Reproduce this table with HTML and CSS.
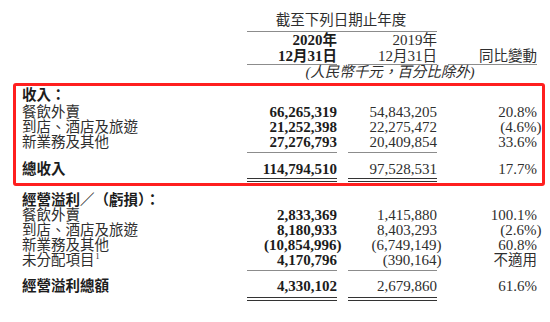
FILE: index.html
```html
<!DOCTYPE html>
<html lang="zh-Hant">
<head>
    <meta charset="UTF-8">
    <title>經營業績</title>
    <link rel="stylesheet" href="styles.css">
</head>
<body>

<div class="report">
    <!-- Шапка таблицы -->
    <div class="row title-row">
        <div class="title">截至下列日期止年度</div>
    </div>
    <div class="row head-row">
        <div class="cell c1 bold">2020<span class="cjk">年</span><br>12<span class="cjk">月</span>31<span class="cjk">日</span></div>
        <div class="cell c2">2019<span class="cjk">年</span><br>12<span class="cjk">月</span>31<span class="cjk">日</span></div>
        <div class="cell c3 bottom"><span class="cjk">同比變動</span></div>
    </div>
    <div class="row unit-row">
        <div class="unit">(<span class="cjk">人民幣千元，百分比除外</span>)</div>
    </div>

    <!-- Выручка -->
    <div class="box">
        <div class="row head-label"><div class="label bold">收入：</div></div>
        <div class="row">
            <div class="label">餐飲外賣</div>
            <div class="cell c1 bold">66,265,319</div>
            <div class="cell c2">54,843,205</div>
            <div class="cell c3">20.8%</div>
        </div>
        <div class="row">
            <div class="label">到店、酒店及旅遊</div>
            <div class="cell c1 bold">21,252,398</div>
            <div class="cell c2">22,275,472</div>
            <div class="cell c3"><span class="neg">(4.6%)</span></div>
        </div>
        <div class="row last">
            <div class="label">新業務及其他</div>
            <div class="cell c1 bold">27,276,793</div>
            <div class="cell c2">20,409,854</div>
            <div class="cell c3">33.6%</div>
        </div>
        <div class="row total total-1">
            <div class="label bold">總收入</div>
            <div class="cell c1 bold">114,794,510</div>
            <div class="cell c2">97,528,531</div>
            <div class="cell c3">17.7%</div>
        </div>
    </div>

    <!-- Операционная прибыль -->
    <div class="section">
        <div class="row"><div class="label bold">經營溢利／（虧損）：</div></div>
        <div class="row">
            <div class="label">餐飲外賣</div>
            <div class="cell c1 bold">2,833,369</div>
            <div class="cell c2">1,415,880</div>
            <div class="cell c3">100.1%</div>
        </div>
        <div class="row">
            <div class="label">到店、酒店及旅遊</div>
            <div class="cell c1 bold">8,180,933</div>
            <div class="cell c2">8,403,293</div>
            <div class="cell c3"><span class="neg">(2.6%)</span></div>
        </div>
        <div class="row">
            <div class="label">新業務及其他</div>
            <div class="cell c1 bold"><span class="neg">(10,854,996)</span></div>
            <div class="cell c2"><span class="neg">(6,749,149)</span></div>
            <div class="cell c3">60.8%</div>
        </div>
        <div class="row last last-2">
            <div class="label">未分配項目<sup class="note">1</sup></div>
            <div class="cell c1 bold">4,170,796</div>
            <div class="cell c2"><span class="neg">(390,164)</span></div>
            <div class="cell c3"><span class="cjk">不適用</span></div>
        </div>
        <div class="row total total-2">
            <div class="label bold">經營溢利總額</div>
            <div class="cell c1 bold">4,330,102</div>
            <div class="cell c2">2,679,860</div>
            <div class="cell c3">61.6%</div>
        </div>
    </div>
</div>

</body>
</html>
```

FILE: styles.css
```css
/* Базовые стили */
body {
    margin: 0;
    background: #fff;
}
.report {
    padding-top: 12px;
    color: #2e2e2e;
    font-family: "Liberation Serif", "Noto Sans CJK TC", serif;
    font-size: 15px;
    line-height: 15px;
}

/* Сетка строк: подпись + три колонки */
.row {
    display: grid;
    grid-template-columns: 225px 90px 100px 100px;
    padding-left: 22px;
}
.box .row, .section .row { padding-left: 0; }

.label {
    grid-column: 1;
    font-size: 14.5px;
    white-space: nowrap;
}
.cjk { font-size: 14.5px; }
.bold { font-weight: bold; color: #1c1c1c; }

.cell { text-align: right; white-space: nowrap; }
.c1 { grid-column: 2; }
.c2 { grid-column: 3; margin-left: 11px; }
.c3 { grid-column: 4; margin-left: 11px; }
.neg { margin-right: -0.3em; }

.note {
    font-size: 8px;
    line-height: 0;
    vertical-align: 6px;
    margin-left: 1px;
}

/* Шапка */
.title {
    grid-column: 2 / 4;
    text-align: center;
    font-size: 14.5px;
    line-height: 16px;
    padding: 0 2px 3px 0;
    border-bottom: 1px solid #8c8c8c;
}
.head-row .cell {
    line-height: 16px;
    border-bottom: 1px solid #8c8c8c;
}
.head-row .bottom {
    display: flex;
    align-items: flex-end;
    justify-content: flex-end;
}
.unit {
    grid-column: 2 / 5;
    text-align: center;
    font-style: italic;
    font-size: 14.5px;
    line-height: 14px;
    padding-right: 4px;
}

/* Красная рамка */
.box {
    margin: 4px 0 0 13px;
    width: 515px;
    padding: 2px 5px 1px 6px;
    border: 3px solid #ff1f1f;
    border-radius: 3px;
}
.head-label { margin-bottom: 2px; }

/* Линии под колонками */
.last .c1, .last .c2 {
    padding-bottom: 1.5px;
    border-bottom: 1px solid #8c8c8c;
}
.last-2 .c1, .last-2 .c2 { padding-bottom: 2px; }
.total .c1, .total .c2 {
    padding-bottom: 1px;
    border-bottom: 4px double #333;
}
.total-1 { margin-top: 9px; }
.total-2 { margin-top: 8px; }
.total-2 .c1, .total-2 .c2 { padding-bottom: 3px; }

.section {
    margin-top: 7px;
    padding-left: 22px;
}
```
